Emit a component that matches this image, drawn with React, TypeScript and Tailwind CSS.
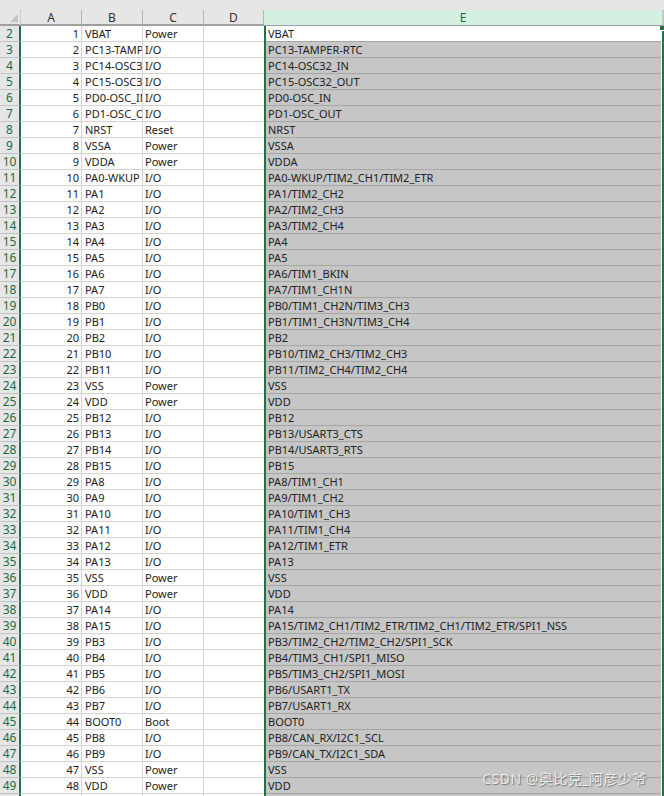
const rows: [string, string, string][] = [
  ["VBAT", "Power", "VBAT"],
  ["PC13-TAMPER-RTC", "I/O", "PC13-TAMPER-RTC"],
  ["PC14-OSC32_IN", "I/O", "PC14-OSC32_IN"],
  ["PC15-OSC32_OUT", "I/O", "PC15-OSC32_OUT"],
  ["PD0-OSC_IN", "I/O", "PD0-OSC_IN"],
  ["PD1-OSC_OUT", "I/O", "PD1-OSC_OUT"],
  ["NRST", "Reset", "NRST"],
  ["VSSA", "Power", "VSSA"],
  ["VDDA", "Power", "VDDA"],
  ["PA0-WKUP", "I/O", "PA0-WKUP/TIM2_CH1/TIM2_ETR"],
  ["PA1", "I/O", "PA1/TIM2_CH2"],
  ["PA2", "I/O", "PA2/TIM2_CH3"],
  ["PA3", "I/O", "PA3/TIM2_CH4"],
  ["PA4", "I/O", "PA4"],
  ["PA5", "I/O", "PA5"],
  ["PA6", "I/O", "PA6/TIM1_BKIN"],
  ["PA7", "I/O", "PA7/TIM1_CH1N"],
  ["PB0", "I/O", "PB0/TIM1_CH2N/TIM3_CH3"],
  ["PB1", "I/O", "PB1/TIM1_CH3N/TIM3_CH4"],
  ["PB2", "I/O", "PB2"],
  ["PB10", "I/O", "PB10/TIM2_CH3/TIM2_CH3"],
  ["PB11", "I/O", "PB11/TIM2_CH4/TIM2_CH4"],
  ["VSS", "Power", "VSS"],
  ["VDD", "Power", "VDD"],
  ["PB12", "I/O", "PB12"],
  ["PB13", "I/O", "PB13/USART3_CTS"],
  ["PB14", "I/O", "PB14/USART3_RTS"],
  ["PB15", "I/O", "PB15"],
  ["PA8", "I/O", "PA8/TIM1_CH1"],
  ["PA9", "I/O", "PA9/TIM1_CH2"],
  ["PA10", "I/O", "PA10/TIM1_CH3"],
  ["PA11", "I/O", "PA11/TIM1_CH4"],
  ["PA12", "I/O", "PA12/TIM1_ETR"],
  ["PA13", "I/O", "PA13"],
  ["VSS", "Power", "VSS"],
  ["VDD", "Power", "VDD"],
  ["PA14", "I/O", "PA14"],
  ["PA15", "I/O", "PA15/TIM2_CH1/TIM2_ETR/TIM2_CH1/TIM2_ETR/SPI1_NSS"],
  ["PB3", "I/O", "PB3/TIM2_CH2/TIM2_CH2/SPI1_SCK"],
  ["PB4", "I/O", "PB4/TIM3_CH1/SPI1_MISO"],
  ["PB5", "I/O", "PB5/TIM3_CH2/SPI1_MOSI"],
  ["PB6", "I/O", "PB6/USART1_TX"],
  ["PB7", "I/O", "PB7/USART1_RX"],
  ["BOOT0", "Boot", "BOOT0"],
  ["PB8", "I/O", "PB8/CAN_RX/I2C1_SCL"],
  ["PB9", "I/O", "PB9/CAN_TX/I2C1_SDA"],
  ["VSS", "Power", "VSS"],
  ["VDD", "Power", "VDD"],
];

const cols = "grid grid-cols-[21px_61px_61px_61px_60px_400px]";
const cell = "h-4 overflow-hidden whitespace-nowrap border-r border-b border-[#d4d4d4] text-[11px] leading-[15px] text-[#222]";

function Row({ n, name, type, full }: { n: number; name?: string; type?: string; full?: string }) {
  const first = n === 1;
  return (
    <div className={cols}>
      <div className="h-4 border-r-2 border-b border-r-[#217346] border-b-[#c4c4c4] bg-[#e6e6e6] text-center text-xs leading-[15px] text-[#1f6b45]">
        {n + 1}
      </div>
      <div className={`${cell} pr-0.5 text-right`}>{name ? n : ""}</div>
      <div className={`${cell} pl-[3px]`}>{name}</div>
      <div className={`${cell} pl-0.5`}>{type}</div>
      <div className="h-4 border-b border-[#d4d4d4]" />
      <div className="h-4 border-r-2 border-l-2 border-r-[#217346] border-l-[#217346] bg-white">
        <div
          className={`mr-px h-4 overflow-hidden whitespace-nowrap border-b border-[#a6a6a6] pl-0.5 text-[11px] leading-[15px] text-[#222] ${
            first ? "bg-white" : "bg-[#c6c6c6]"
          }`}
        >
          {full}
        </div>
      </div>
    </div>
  );
}

export default function App() {
  return (
    <div className="relative h-[796px] w-[664px] overflow-hidden bg-white font-['Noto_Sans',sans-serif]">
      <div className="h-2.5 bg-[#e6e6e6]" />
      <div className={`${cols} h-4 border-b-2 border-[#9f9f9f] bg-[#e6e6e6] text-center text-xs leading-[15px] text-[#333]`}>
        <div className="border-r border-[#c8c8c8]">
          <div className="ml-2.5 mt-1 h-0 w-0 border-b-8 border-l-8 border-b-[#c4c4c4] border-l-transparent" />
        </div>
        <div className="border-r border-[#b4b4b4]">A</div>
        <div className="border-r border-[#b4b4b4]">B</div>
        <div className="border-r border-[#b4b4b4]">C</div>
        <div className="border-r border-[#b4b4b4]">D</div>
        <div className="border-r-2 border-[#c4c4c4] bg-[#d3f0e0] text-[#1f6b45]">E</div>
      </div>
      {rows.map(([name, type, full], i) => (
        <Row key={i} n={i + 1} name={name} type={type} full={full} />
      ))}
      <Row n={49} />
      {/* fill handle on the active cell */}
      <div className="absolute left-[660px] top-[26px] h-[5px] w-1 border-b border-white bg-[#217346]" />
      <div className="absolute bottom-[7px] right-[17px] font-['Noto_Sans','Noto_Sans_CJK_SC',sans-serif] text-[14px] leading-5 tracking-[0.5px] text-white/75 [text-shadow:1px_1px_1px_#777]">
        CSDN @奥比克_阿彦少爷
      </div>
    </div>
  );
}
